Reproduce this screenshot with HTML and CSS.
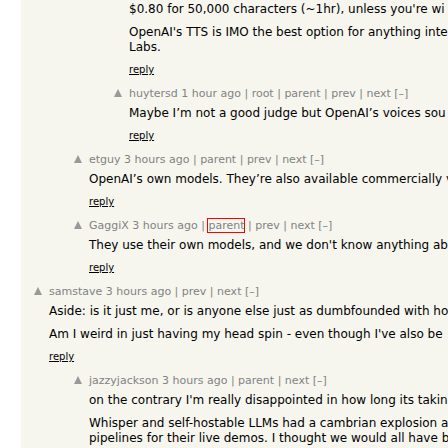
FILE: index.html
```html
<!DOCTYPE html>
<html lang="en">
<head>
<meta charset="utf-8">
<title>Comments</title>
<link rel="stylesheet" href="styles.css">
</head>
<body>
<svg class="defs" aria-hidden="true"><symbol id="up" viewBox="0 0 8 8"><path d="M4 0L8 8H0Z" fill="#999"/></symbol></svg>
<main class="thread">
  <article class="comment level-2">
    <div class="body">
      <p>$0.80 for 50,000 characters (~1hr), unless you're wi</p>
      <p>OpenAI's TTS is IMO the best option for anything inte<br>Labs.</p>
      <a class="reply" href="#">reply</a>
    </div>
  </article>
  <article class="comment level-2">
    <a class="vote" href="#" aria-label="upvote"><svg><use href="#up"/></svg></a>
    <div class="body">
      <header><a href="#">huytersd</a> <a href="#">1 hour ago</a> | <a href="#">root</a> | <a href="#">parent</a> | <a href="#">prev</a> | <a href="#">next</a> <a href="#">[–]</a></header>
      <p>Maybe I’m not a good judge but OpenAI’s voices sou</p>
      <a class="reply" href="#">reply</a>
    </div>
  </article>
  <article class="comment level-1">
    <a class="vote" href="#" aria-label="upvote"><svg><use href="#up"/></svg></a>
    <div class="body">
      <header><a href="#">etguy</a> <a href="#">3 hours ago</a> | <a href="#">parent</a> | <a href="#">prev</a> | <a href="#">next</a> <a href="#">[–]</a></header>
      <p>OpenAI’s own models. They’re also available commercially v</p>
      <a class="reply" href="#">reply</a>
    </div>
  </article>
  <article class="comment level-1">
    <a class="vote" href="#" aria-label="upvote"><svg><use href="#up"/></svg></a>
    <div class="body">
      <header><a href="#">GaggiX</a> <a href="#">3 hours ago</a> | <a class="marked" href="#">parent</a> | <a href="#">prev</a> | <a href="#">next</a> <a href="#">[–]</a></header>
      <p>They use their own models, and we don't know anything ab</p>
      <a class="reply" href="#">reply</a>
    </div>
  </article>
  <article class="comment">
    <a class="vote" href="#" aria-label="upvote"><svg><use href="#up"/></svg></a>
    <div class="body">
      <header><a href="#">samstave</a> <a href="#">3 hours ago</a> | <a href="#">prev</a> | <a href="#">next</a> <a href="#">[–]</a></header>
      <p>Aside: is it just me, or is anyone else just as dumbfounded with ho</p>
      <p>Am I weird in just having my head spin - even though I've also be</p>
      <a class="reply" href="#">reply</a>
    </div>
  </article>
  <article class="comment level-1">
    <a class="vote" href="#" aria-label="upvote"><svg><use href="#up"/></svg></a>
    <div class="body">
      <header><a href="#">jazzyjackson</a> <a href="#">3 hours ago</a> | <a href="#">parent</a> | <a href="#">next</a> <a href="#">[–]</a></header>
      <p>on the contrary I'm really disappointed in how long its takin</p>
      <p>Whisper and self-hostable LLMs had a cambrian explosion a<br>pipelines for their live demos. I thought we would all have b</p>
    </div>
  </article>
</main>
</body>
</html>
```
FILE: styles.css
```css
body {
  margin: 0;
  background: #fff;
  color: #000;
  font: 12px/15px Verdana, "DejaVu Sans", sans-serif;
  overflow: hidden;
}

.defs {
  position: absolute;
  width: 0;
  height: 0;
}

.thread {
  display: flex;
  flex-direction: column;
  gap: 10px;
  margin-left: 21px;
  padding: 2px 0 8px 28px;
  background: #f6f6ef;
  white-space: nowrap;
  overflow: hidden;
}

.comment {
  position: relative;
}

.level-1 {
  margin-left: 40px;
}

.level-2 {
  margin-left: 80px;
}

.vote {
  position: absolute;
  top: 2px;
  left: -15px;
}

.vote svg {
  display: block;
  width: 8px;
  height: 8px;
}

header {
  margin-bottom: 5px;
  color: #828282;
  font-size: 11px;
  line-height: 14px;
}

header a {
  color: inherit;
  text-decoration: none;
}

.marked {
  outline: 1px solid #f00;
}

p {
  margin: 0 0 8px;
}

.reply {
  display: block;
  width: max-content;
  color: #000;
  font-size: 10px;
  line-height: 14px;
}
```
